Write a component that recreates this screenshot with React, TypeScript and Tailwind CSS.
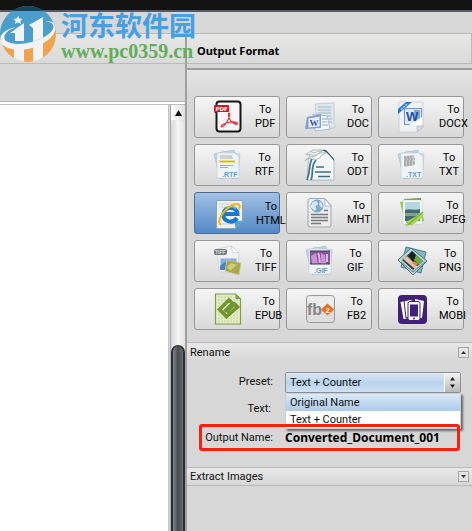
import { useState } from 'react';
import type { ReactNode } from 'react';

const PdfIcon = () => (
  <svg width="32" height="34" viewBox="0 0 32 34">
    <rect x="4.5" y="1.5" width="24" height="30" rx="3" fill="#f6f6f6" stroke="#161616" strokeWidth="2" />
    <path d="M17 13c1.500 0 .5 4-.6 6-1.800 4.500-5.600 8.500-7 8-1.600-1 3-4 7.700-4.800 4.500-.8 8.500 0 8.300 1.600-.4 1.500-4.300-.3-6.600-3-2.600-3-3-7.800-1.800-7.800z" fill="none" stroke="#e02a33" strokeWidth="1.100" />
    <rect x="2" y="5" width="15" height="7" rx="1" fill="#d9141c" />
    <text x="3.500" y="10.800" fontSize="5.500" fontWeight="bold" fontFamily="DejaVu Sans" fill="#fff">PDF</text>
    <path d="M2 12h3v2z" fill="#7a0b10" />
  </svg>
);

const DocIcon = () => (
  <svg width="32" height="34" viewBox="0 0 32 34">
    <path d="M11 4l19-1v21c2 1 2 4-1 4H14z" fill="#dce7ec" stroke="#b4c3ca" strokeWidth=".7" />
    <path d="M14 7h13M14 10h13M14 13h13M17 16h10M20 19h8M20 22h8" stroke="#a5bac4" strokeWidth="1" />
    <path d="M9 14l14 2 3 13-15 2z" fill="#f5f8fc" stroke="#9db1cf" strokeWidth=".8" />
    <path d="M3 17l14-3v14L1 29z" fill="#7f9ed5" />
    <path d="M4.500 18.500l11-2v10l-11 1z" fill="#e9effa" />
    <text x="5.500" y="26" fontSize="9" fontWeight="bold" fontFamily="Liberation Serif" fill="#3655a3">W</text>
    <path d="M18 19h5M18 22h5M18 25h6" stroke="#8ba6d6" />
  </svg>
);

const DocxIcon = () => (
  <svg width="32" height="34" viewBox="0 0 32 34">
    <path d="M3 2h24v25l-6 5H3z" fill="#f0f1f5" stroke="#c9cbd2" strokeWidth=".8" />
    <path d="M28 26h-7v6z" fill="#d9dbe2" stroke="#aeb0b8" strokeWidth=".6" />
    <path d="M2 14V9l8-7h6z" fill="#2878c8" />
    <path d="M5 9.500l6-5.500" stroke="#b4d8f6" strokeWidth="1.500" strokeDasharray="2 1" />
    <rect x="8.500" y="8.500" width="17" height="16" fill="#dfeaf7" stroke="#7294c4" />
    <rect x="18" y="10" width="6" height="13" fill="#84a7d4" />
    <path d="M13 25l13-8v8z" fill="#fff" />
    <text x="10" y="21" fontSize="13" fontWeight="bold" fontFamily="Liberation Sans" fill="#1853a7">W</text>
  </svg>
);

const StackedSheet = ({ label, children }: { label: string; children: ReactNode }) => (
  <svg width="32" height="34" viewBox="0 0 32 34">
    <path d="M2 6l20-4 5 25-19 4z" fill="#b9d3e6" stroke="#9dbdd3" strokeWidth=".6" />
    <path d="M10 3l18 3-2 25-20-2z" fill="#c8dcea" stroke="#a9c3d5" strokeWidth=".6" />
    <path d="M5 5h18l4 4v21H5z" fill="#eef3f6" stroke="#c2cdd4" strokeWidth=".6" />
    {children}
    <text x="10" y="28.500" fontSize="7" fontWeight="bold" fontFamily="Liberation Sans" fill="#6c9bbd">{label}</text>
  </svg>
);

const RtfIcon = () => (
  <StackedSheet label=".RTF">
    <path d="M8 8h12M8 10h13" stroke="#a4a6a7" strokeWidth=".9" />
    <path d="M7 12h16v3H7z" fill="#e8e280" />
    <path d="M8 13.500h15M8 17.500h13M8 19.500h8" stroke="#a4a4a0" strokeWidth=".9" />
    <path d="M8 17.500h6" stroke="#d68583" />
  </StackedSheet>
);

const TxtIcon = () => (
  <StackedSheet label=".TXT">
    <path d="M8 8l10-1 1 10-11 2z" fill="#c2c4c5" />
    <path d="M8 9h9M9 11h10M8 13h9M8 15h11M8 17h8" stroke="#95999b" strokeWidth="1" strokeDasharray="2 1" />
  </StackedSheet>
);

const GifIcon = () => (
  <StackedSheet label=".GIF">
    <rect x="6" y="7" width="20" height="13" fill="#80569a" />
    <path d="M7 12l5-3 2 11H8zM17 9l4 2 1 9h-5z" fill="#cf91d6" />
    <path d="M14 9c2 3 1 6 2 10M23 10v8" stroke="#e3b5e0" strokeWidth="2" fill="none" />
    <path d="M6 7h20M6 20h20" stroke="#40364e" />
  </StackedSheet>
);

const OdtIcon = () => (
  <svg width="32" height="34" viewBox="0 0 32 34">
    <path d="M8 2h13l9 10v20H3C5 20 2 12 8 2z" fill="#f2f6f8" stroke="#9bb0ba" strokeWidth=".8" />
    <path d="M17 2c5 1 9 5 13 11V11l-8-9z" fill="#26505f" />
    <path d="M9 9C4 16 7 22 3 32M12 12c-6 7-2 13-5 20" stroke="#447488" strokeWidth="1.800" fill="none" />
    <path d="M1 13c5-7 8-2 13-7 3-2 6-1 8-1-5 1-6 8-13 6-4-1-5-1-8 2z" fill="#fff" stroke="#9ba5aa" strokeWidth=".8" />
    <path d="M2 7c4-6 6-1 11-3 2-1 3-1 5-1-4 2-5 5-10 4-3-1-4-1-6 0z" fill="#fff" stroke="#9ba5aa" strokeWidth=".8" />
    <path d="M12 19h8M11 24h16M14 28.500h12" stroke="#3d6c84" strokeWidth="1.600" />
  </svg>
);

const HtmlIcon = () => (
  <svg width="32" height="34" viewBox="0 0 32 34">
    <path d="M3.500 3.500h26v20l-7 8h-19z" fill="#edf1ef" stroke="#8ca5b4" />
    <path d="M6 7h20M6 10h20M6 27h14" stroke="#c9cfcc" />
    <path d="M29.500 23.500l-7 8-1-7z" fill="#48a7d8" />
    <path d="M24 21c-4.500 6.500-14.500 3.500-13.500-4.500C11.500 8.500 24.500 9.500 24.500 17H11.500" fill="none" stroke="#1b78cf" strokeWidth="4" />
    <path d="M13 11.500c3-3 8-2.500 10 .5" fill="none" stroke="#5fb9f0" strokeWidth="1.500" />
    <path d="M8 28c-5-3 2-15 11-19.500 7-3 9-1 7 4" fill="none" stroke="#efb51b" strokeWidth="2" />
  </svg>
);

const MhtIcon = () => (
  <svg width="32" height="34" viewBox="0 0 32 34">
    <path d="M6 2.500h15l6 7V29q0 2-2 2H6q-2 0-2-2V4.500q0-2 2-2z" fill="#e9ebec" stroke="#a2a5a7" />
    <path d="M21 3v7h6z" fill="#fff" stroke="#a2a5a7" strokeWidth=".8" />
    <circle cx="13" cy="10" r="6.500" fill="#7ea7cd" />
    <path d="M8.500 6l4-1 2 3-3 2 1 3-2 2-4-4zM15.500 5l3 3v4l-3-2z" fill="#d5e7f3" />
    <path d="M20 14.500h4M7 18.500h17M7 21.500h17M7 24.500h17M7 27.500h10" stroke="#77797b" strokeWidth="1.300" />
  </svg>
);

const JpegIcon = () => (
  <svg width="32" height="34" viewBox="0 0 32 34">
    <path d="M4 6l20-3 4 22-18 5z" fill="#8dc63f" />
    <path d="M8 3l17-1 1 23-17 2z" fill="#5c9b2d" />
    <path d="M7 4h19v24H7z" fill="#f7f9f7" stroke="#c5ccc5" strokeWidth=".6" />
    <path d="M9 6h15v10H9z" fill="#b6d5e3" />
    <path d="M9 14c5-2 9 1 15-1v12H9z" fill="#426b75" />
    <path d="M9 17h15v3H9z" fill="#8a9d90" />
    <path d="M12 25l15-9-1 6-11 8z" fill="#a5d955" />
    <path d="M10 25l3 3 14-12" fill="none" stroke="#79b733" strokeWidth="1.500" />
  </svg>
);

const TiffIcon = () => (
  <svg width="32" height="34" viewBox="0 0 32 34">
    <path d="M5 5l14-3 8 7-1 19H7z" fill="#f0f1f2" stroke="#c7cacc" strokeWidth=".7" />
    <path d="M19 2l2 7 6-1z" fill="#fff" stroke="#bfc2c4" strokeWidth=".6" />
    <rect x="2" y="5" width="13" height="6" rx="2" fill="#777a7d" />
    <text x="3" y="10" fontSize="5" fontWeight="bold" fontFamily="Liberation Sans" fill="#ddd">TIFF</text>
    <path d="M8 14h17v12H8z" fill="#80afe0" stroke="#e8edf2" />
    <path d="M8 22l5-4 6 3v5H8z" fill="#4884c2" />
    <path d="M15 16l14 3-2 12-14-4z" fill="#aaa64b" stroke="#d1cda0" strokeWidth=".7" />
    <path d="M15 23l4-4 6 2-7 6z" fill="#d0cb76" />
  </svg>
);

const PngIcon = () => (
  <svg width="32" height="34" viewBox="0 0 32 34">
    <path d="M10 3l20 5-5 21-20-6z" fill="#89b5bf" stroke="#4d7d89" />
    <path d="M2 16L15 4l16 13-14 14z" fill="#b9d7db" stroke="#47737e" />
    <path d="M6 16l10-9 11 10-10 9z" fill="#45362f" />
    <path d="M7 15l12 10 3-2L11 12z" fill="#d6c4b7" />
    <path d="M16 7l7 8-5 4-5-7z" fill="#17231f" />
    <path d="M20 11l7 6-4 4-5-5z" fill="#6aad3d" />
    <path d="M18 17l4 3-2 2-4-3z" fill="#e58a42" />
    <path d="M5 18l12 10 12-10" stroke="#4d8590" fill="none" />
  </svg>
);

const EpubIcon = () => (
  <svg width="32" height="34" viewBox="0 0 32 34">
    <path d="M3.500 2h20l5 5v25h-25z" fill="#e2ebc8" stroke="#7e9f43" strokeWidth="1.200" />
    <path d="M6 5h15M6 8h20M6 11h20M6 14h20M6 17h20M6 20h20M6 23h20M6 26h20M6 29h20" stroke="#c0d39b" strokeDasharray="2 1" />
    <path d="M23.500 2v5h5z" fill="#7e9f43" />
    <path d="M12.500 19.500l8-8-3.500-3.500L7.500 17.500l7 7 11-9.500-3-3-8 8" fill="none" stroke="#71952f" strokeWidth="3.600" />
  </svg>
);

const Fb2Icon = () => (
  <svg width="32" height="34" viewBox="0 0 32 34">
    <rect x="2.500" y="3.500" width="28" height="27" rx="3" fill="#dedede" stroke="#999" />
    <rect x="3.500" y="4.500" width="26" height="12" rx="2" fill="#ececec" />
    <text x="3" y="23" fontSize="16" fontWeight="bold" fontFamily="Liberation Sans Narrow, Liberation Sans" fill="#858585">fb</text>
    <path d="M23.500 11.500l6.500 6-6.500 6-6.500-6z" fill="#f26a13" />
    <text x="21.500" y="20.500" fontSize="8" fontWeight="bold" fontFamily="Liberation Sans" fill="#fff">2</text>
  </svg>
);

const MobiIcon = () => (
  <svg width="32" height="34" viewBox="0 0 32 34">
    <rect x="2" y="3" width="29" height="29" rx="4" fill="#40207b" />
    <path d="M4.500 10l9-2v18l-6 1zM19 7l9 2-2 17h-7z" fill="#fff" />
    <path d="M8 9l8-2v17l-6 2z" fill="#fff" stroke="#40207b" />
    <rect x="12" y="9.500" width="12" height="19" rx="2" fill="#fff" stroke="#40207b" />
    <rect x="14" y="12.500" width="8" height="12" fill="#40207b" />
    <circle cx="18" cy="26.500" r="1" fill="#40207b" />
  </svg>
);

const formats = [
  { name: 'PDF', Icon: PdfIcon },
  { name: 'DOC', Icon: DocIcon },
  { name: 'DOCX', Icon: DocxIcon },
  { name: 'RTF', Icon: RtfIcon },
  { name: 'ODT', Icon: OdtIcon },
  { name: 'TXT', Icon: TxtIcon },
  { name: 'HTML', Icon: HtmlIcon },
  { name: 'MHT', Icon: MhtIcon },
  { name: 'JPEG', Icon: JpegIcon },
  { name: 'TIFF', Icon: TiffIcon },
  { name: 'GIF', Icon: GifIcon },
  { name: 'PNG', Icon: PngIcon },
  { name: 'EPUB', Icon: EpubIcon },
  { name: 'FB2', Icon: Fb2Icon },
  { name: 'MOBI', Icon: MobiIcon },
];

const presets = ['Original Name', 'Text + Counter'];

function SectionHeader({ title, open, onToggle }: { title: string; open: boolean; onToggle: () => void }) {
  return (
    <button
      onClick={onToggle}
      aria-expanded={open}
      className={`flex h-[19px] w-full items-center justify-between border-t border-[#b9b9b9] bg-linear-to-b from-[#e8e8e8] to-[#d7d7d7] px-[3px] text-left ${
        open ? '' : 'border-b'
      }`}
    >
      {title}
      <span className="flex h-[11px] w-[11px] items-center justify-center border border-[#a6a6a6] bg-[#e4e4e4]">
        <svg width="5" height="3" viewBox="0 0 5 3">
          <path d={open ? 'M0 3L2.500 0 5 3z' : 'M0 0l2.500 3L5 0z'} fill="#333" />
        </svg>
      </span>
    </button>
  );
}

function Watermark() {
  return (
    <div className="pointer-events-none absolute left-0 top-1.5 z-20 flex gap-[5px]">
      <svg width="56" height="56" viewBox="0 0 56 56">
        <defs>
          <clipPath id="badge">
            <circle cx="28" cy="28" r="28" />
          </clipPath>
        </defs>
        <g clipPath="url(#badge)">
          <path d="M0 0h56v26C43 42 17 44 0 34z" fill="#4b9dcb" />
          <path d="M0 0h56v5H0z" fill="#1d4258" />
          <path d="M0 38c18 8 42 0 56-16v34H0z" fill="#f0a24c" />
          <path d="M10 27l14-10v18h-9v-8zM29 19l14-8v21l-10 4V22z" fill="#f2f3f4" />
          <path d="M14 42h10v14H14zM33 41l10-4v19H33z" fill="#f2f3f4" />
          <path d="M16 21C5 25 2 31 6 35c13 8 42-2 47-12 2-5-3-8-9-7 9-3 14 3 11 9C49 41 16 50 3 39-4 31 4 23 16 21z" fill="#f2f3f4" />
          <path d="M18 10l1.500 2.500 3 .5-2 2 .5 3-3-1.500-3 1.500.5-3-2-2 3-.5z" fill="#e7f0f6" />
        </g>
      </svg>
      <div>
        <div className="pt-[3px] font-['Noto_Sans_CJK_SC',sans-serif] text-[27px] leading-[32px] font-bold text-[#459fe3]">河东软件园</div>
        <div className="font-['Liberation_Serif',serif] text-[20px] leading-[20px] font-bold text-[#62ad5a]">www.pc0359.cn</div>
      </div>
    </div>
  );
}

export default function App() {
  const [format, setFormat] = useState('HTML');
  const [preset, setPreset] = useState('Text + Counter');
  const [listOpen, setListOpen] = useState(true);
  const [renameOpen, setRenameOpen] = useState(true);
  const [extractOpen, setExtractOpen] = useState(false);
  const [text, setText] = useState('');

  return (
    <div className="relative flex min-h-screen flex-col bg-[#d7d7d7] font-[Roboto,sans-serif] text-[11px] leading-[15px] text-[#111]">
      <Watermark />
      <div className="h-3 border-b-2 border-[#555a64] bg-[#131313]" />
      <div className="h-[21px]" />

      <div className="flex flex-1">
        <main className="flex min-w-0 flex-1 flex-col">
          <div className="h-[31px] border-y border-[#bababa] bg-linear-to-b from-[#e7e7e7] to-[#d9d9d9]" />
          <div className="h-[38px] border-b border-[#b5b5b5]" />
          <div className="h-0.5 bg-white" />
          <div className="flex flex-1 border-t border-[#bdbdbd]">
            <div className="flex-1 border-r border-[#c4c4c4] bg-white" />
            <div className="ml-px flex w-[15px] flex-col border-l border-[#aaa] bg-[#e3e3e3]">
              <button aria-label="Scroll up" className="flex h-[15px] items-center justify-center bg-linear-to-r from-white to-[#ddd]">
                <svg width="7" height="6" viewBox="0 0 7 6">
                  <path d="M0 6l3.500-6L7 6z" fill="#111" />
                </svg>
              </button>
              <div className="-mb-1.5 h-[231px] rounded-t-full bg-linear-to-r from-[#d6d6d6] via-[#f6f6f6] to-[#e2e2e2]" />
              <div className="flex-1 rounded-t-full border-x-2 border-t border-[#2c2e31] bg-linear-to-r from-[#83888f] via-[#474b50] to-[#6b6c6f]" />
            </div>
          </div>
        </main>

        <aside className="w-[287px] shrink-0 border-l-2 border-[#a0a0a0]">
          <h2 className="flex h-[31px] items-center border-y border-r border-[#b9b9b9] bg-linear-to-b from-[#e7e7e5] to-[#d9d9d9] pl-2.5 pt-1 font-['Noto_Sans',sans-serif] text-[11px] font-bold text-black">
            Output Format
          </h2>
          <div className="mt-1 h-0.5 bg-[#9c9c9c]" />

          <div className="bg-linear-to-b from-[#e4e4e4] to-[#d7d7d7] to-10% pb-3 pl-[7px] pt-[26px]">
            <div className="grid grid-cols-[86px_86px_86px] gap-x-1.5 gap-y-1.5">
              {formats.map(({ name, Icon }) => (
                <button
                  key={name}
                  onClick={() => setFormat(name)}
                  className={`flex h-[42px] items-center rounded-[3px] border ${
                    format === name
                      ? 'border-[#4a6c93] bg-linear-to-b from-[#a3c2e5] to-[#5288c5] pl-[18px] pt-px'
                      : 'border-[#979797] bg-linear-to-b from-[#f5f5f5] via-[#e7e7e7] to-[#d8d8d8] pl-[17px]'
                  }`}
                >
                  <span className="shrink-0">
                    <Icon />
                  </span>
                  <span className="ml-[11px] text-center leading-[14px] text-black">
                    To
                    <br />
                    {name}
                  </span>
                </button>
              ))}
            </div>
          </div>

          <SectionHeader title="Rename" open={renameOpen} onToggle={() => setRenameOpen(!renameOpen)} />
          {renameOpen && (
            <div className="pb-4 pt-[11px]">
              <div className="flex items-center">
                <label htmlFor="preset" className="w-[86px] pb-0.5 text-right">Preset:</label>
                <div className="relative ml-3 flex h-[21px] w-44 rounded-[2px] border border-[#8b9098] bg-linear-to-b from-[#dce8f5] via-[#b9d3ee] to-[#cfe1f3]">
                  <select
                    id="preset"
                    value={preset}
                    onChange={(e) => setPreset(e.target.value)}
                    onClick={() => setListOpen(!listOpen)}
                    className="w-full appearance-none pl-1 text-[11px] outline-none"
                  >
                    {presets.map((p) => (
                      <option key={p}>{p}</option>
                    ))}
                  </select>
                  <span className="pointer-events-none flex w-4 shrink-0 items-center justify-center border-l border-white bg-linear-to-b from-[#f4f4f4] to-[#b9b9b9]">
                    <svg width="5" height="11" viewBox="0 0 5 11">
                      <path d="M0 3.500L2.500 0 5 3.500zM0 7.500L2.500 11 5 7.500z" fill="#222" />
                    </svg>
                  </span>
                  {listOpen && (
                    <ul className="absolute -left-px top-5 w-44 border border-[#c9ced4] bg-white shadow-[2px_2px_2px_#666]">
                      {presets.map((p) => (
                        <li key={p} className="h-[17px] bg-white pl-1 leading-[17px] first:bg-linear-to-b first:from-[#dce9f6] first:to-[#abcaea]">
                          {p}
                        </li>
                      ))}
                    </ul>
                  )}
                </div>
              </div>
              <div className="mt-[7px] flex items-center">
                <label htmlFor="text" className="w-[84px] text-right">Text:</label>
                <input id="text" value={text} onChange={(e) => setText(e.target.value)} className="ml-[15px] h-4 w-40 border border-[#aaa] bg-white px-1" />
              </div>
              <div className="relative ml-3 mr-3 mt-2 flex h-[27px] items-center rounded-[3px] border-3 border-[#fa2010]">
                <span className="w-[71px] text-right">Output Name:</span>
                <span className="ml-3 font-['Noto_Sans',sans-serif] text-[12px] font-bold text-black">Converted_Document_001</span>
              </div>
            </div>
          )}
          <SectionHeader title="Extract Images" open={extractOpen} onToggle={() => setExtractOpen(!extractOpen)} />
        </aside>
      </div>
    </div>
  );
}
